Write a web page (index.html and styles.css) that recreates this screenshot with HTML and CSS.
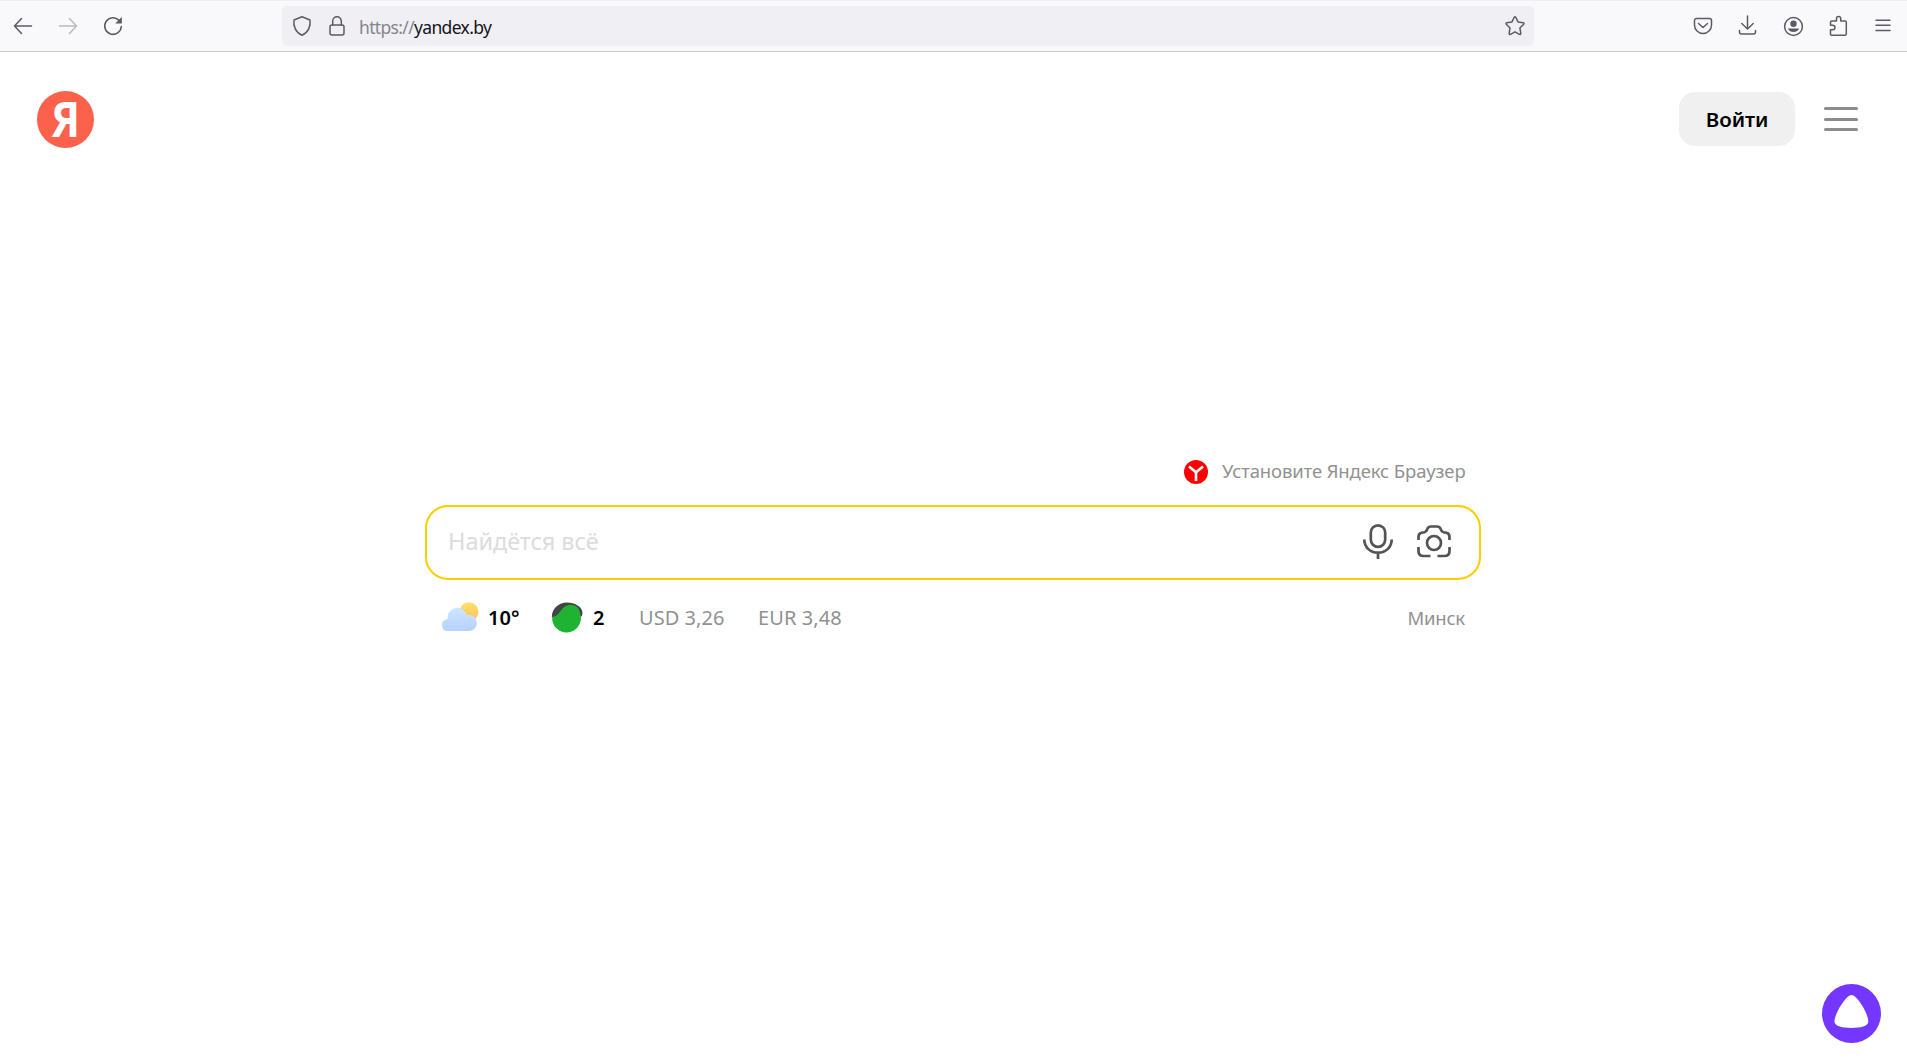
FILE: index.html
```html
<!DOCTYPE html>
<html lang="ru">
<head>
<meta charset="utf-8">
<title>Яндекс</title>
<link rel="stylesheet" href="styles.css">
</head>
<body>
<header class="toolbar">
  <nav class="nav">
    <svg class="ico" width="22" height="22" viewBox="0 0 22 22"><path d="M19.500 11H2.500M9.500 3.500L2.500 11l7 7.500"/></svg>
    <svg class="ico faded" width="22" height="22" viewBox="0 0 22 22"><path d="M2.500 11h17M12.500 3.500l7 7.500-7 7.500"/></svg>
    <svg class="ico" width="22" height="22" viewBox="0 0 22 22"><path d="M17.200 5.500A8.300 8.300 0 1 0 19.300 11.500"/><path class="solid" d="M19.800 2v6.600h-6.600z"/></svg>
  </nav>
  <div class="address">
    <svg class="ico" width="22" height="22" viewBox="0 0 22 22"><path d="M11 1.800L19 5c.9 6-1.600 12.600-8 15.300C4.600 17.600 2.100 11 3 5z"/></svg>
    <svg class="ico lock" width="22" height="22" viewBox="0 0 22 22"><rect x="4" y="10" width="14" height="10" rx="2"/><path d="M6.700 10V6a4.300 4.300 0 0 1 8.600 0v4"/></svg>
    <span class="url"><span class="scheme">https://</span>yandex.by</span>
    <svg class="ico star" width="22" height="22" viewBox="0 0 22 22"><path d="M10.200 2.300q.8-1.300 1.600 0l2.200 4.600 5.200.8q1.400.4.500 1.500l-3.800 3.800.9 5.300q0 1.500-1.400 1L11 16.800l-4.500 2.500q-1.400.5-1.400-1L6 13 2.300 9.200q-.9-1.100.5-1.500L8 6.900z"/></svg>
  </div>
  <div class="tools">
    <svg class="ico" width="22" height="22" viewBox="0 0 22 22"><path d="M4.500 3.500h13a2 2 0 0 1 2 2V10a8.500 8.500 0 0 1-17 0V5.500a2 2 0 0 1 2-2zM6.500 8.500l4.500 4 4.500-4"/></svg>
    <svg class="ico" width="22" height="22" viewBox="0 0 22 22"><path d="M10.500 1v13M4.800 8.500l5.700 5.500 5.700-5.500M2.500 15.500V17a2 2 0 0 0 2 2h12a2 2 0 0 0 2-2v-1.500"/></svg>
    <svg class="ico" width="22" height="22" viewBox="0 0 22 22"><circle cx="11.500" cy="11.500" r="8.900"/><circle class="solid" cx="11.500" cy="8.800" r="3.200"/><path class="solid" d="M6 13.500h11c-.5 2.300-2.800 3.500-5.500 3.500S6.500 15.800 6 13.500z"/></svg>
    <svg class="ico" width="22" height="22" viewBox="0 0 22 22"><path d="M4.500 20.300q-1 0-1-1v-4.500h2.200a2.300 2.300 0 0 0 0-4.600H3.500V7.300q0-1.200 1.200-1.200h4.800V3.500a2.100 2.100 0 0 1 4.200 0v2.600h4.400q1.200 0 1.200 1.200v11.500q0 1.500-1.200 1.500z"/></svg>
    <svg class="ico" width="22" height="22" viewBox="0 0 22 22"><path d="M4 5.200h14M4 10.300h14M4 15.400h14"/></svg>
  </div>
</header>

<div class="head">
  <div class="logo"><svg width="57" height="57" viewBox="0 0 57 57"><text class="ya" x="14" y="46" textLength="29" lengthAdjust="spacingAndGlyphs">Я</text></svg></div>
  <div class="account">
    <button class="login">Войти</button>
    <div class="burger"><i></i><i></i><i></i></div>
  </div>
</div>

<main class="center">
  <div class="promo">
    <svg width="24" height="24" viewBox="0 0 24 24"><circle cx="12" cy="12" r="12" fill="#f00"/><path d="M5 6.500l7 5.700 7-5.700M12 12v9" fill="none" stroke="#fff" stroke-width="2.600"/></svg>
    <span class="promo-text">Установите Яндекс Браузер</span>
  </div>
  <div class="search">
    <span class="hint">Найдётся всё</span>
    <svg class="act" width="30" height="36" viewBox="0 0 30 36"><rect x="7.800" y="1.300" width="14.400" height="21.500" rx="7.200"/><path d="M1.300 15.500c0 7.300 5.500 13.200 13.700 13.200s13.700-5.900 13.700-13.200M15 28.500V35"/></svg>
    <svg class="act" width="34" height="34" viewBox="0 0 34 34"><circle cx="17" cy="18" r="7"/><path d="M1.500 15V12q0-3.500 3-4.200l3-.6q1.800-.5 2.500-2.500 1-3.200 4-3.200h6q3 0 4 3.200.7 2 2.500 2.500l3 .6q3 .7 3 4.200v3M1.500 22v4q0 5 5 5h7M32.500 22v4q0 5-5 5h-7"/></svg>
  </div>
  <div class="info">
    <svg width="38" height="30" viewBox="0 0 38 30">
      <defs>
        <linearGradient id="sun" x2="0" y2="1"><stop offset="0" stop-color="#ffe06a"/><stop offset="1" stop-color="#ffc15e"/></linearGradient>
        <linearGradient id="cloud" x2="0" y2="1"><stop offset="0" stop-color="#cde7ff"/><stop offset="1" stop-color="#b5d1ff"/></linearGradient>
      </defs>
      <circle cx="28" cy="9.700" r="9.500" fill="url(#sun)"/>
      <path d="M6 29a6 6 0 0 1-.2-11.800l.9-.1C6 10.500 11 5.800 16.500 5.800c4.200 0 7.500 2.500 8.900 7.200 5.800-1.300 10.400 2.600 10.400 8 0 4.700-3.500 8-8 8z" fill="url(#cloud)"/>
    </svg>
    <b class="temp">10°</b>
    <svg class="traffic" width="32" height="30" viewBox="0 0 32 30"><path d="M.8 15C1 6 8 .5 16 .5S31.500 5 31.500 11q0 3-2 4L20 10 3 16z" fill="#444"/><path d="M1.200 14.800c5 .2 6.800-4.300 10.200-8 4.500-5 11-5 15-1.500 2 2 2.600 5 3.300 8.200a14.400 14.400 0 1 1-28.500 1.300z" fill="#20b332"/></svg>
    <b class="score">2</b>
    <span class="usd">USD 3,26</span>
    <span class="eur">EUR 3,48</span>
    <span class="city">Минск</span>
  </div>
</main>

<div class="alice"><svg width="59" height="59" viewBox="0 0 59 59"><circle cx="29.500" cy="29.500" r="29.500" fill="#7337ff"/><path d="M29.500 11c5.500 0 16.800 18.500 16.800 26.500 0 5-8 6.400-16.800 6.400s-17-1.400-17-6.400C12.500 29.500 24 11 29.500 11z" fill="#fff"/></svg></div>
</body>
</html>
```
FILE: styles.css
```css
* { box-sizing: border-box; }
body {
  margin: 0;
  height: 1062px;
  overflow: hidden;
  background: #fff;
  font-family: "Noto Sans", sans-serif;
  display: flex;
  flex-direction: column;
}
svg { display: block; flex: none; overflow: visible; }

.toolbar {
  height: 52px;
  flex: none;
  display: flex;
  align-items: center;
  background: #f9f9fb;
  border-top: 1px solid #f0f0f2;
  border-bottom: 1px solid #c9c9ce;
}
.ico { fill: none; stroke: #5b5b66; stroke-width: 1.5; stroke-linecap: round; stroke-linejoin: round; }
.ico .solid { fill: #5b5b66; stroke: none; }
.faded { opacity: .4; }
.nav { width: 282px; padding-left: 12px; display: flex; gap: 23px; }
.address {
  width: 1252px;
  height: 40px;
  padding: 0 8px 0 9px;
  display: flex;
  align-items: center;
  background: #f0f0f4;
  border-radius: 5px;
}
.lock { margin-left: 13px; }
.url { margin-left: 11px; font-size: 17.500px; letter-spacing: -.66px; color: #15141a; white-space: nowrap; padding-top: 2px; }
.scheme { color: #85858c; }
.star { margin-left: auto; }
.tools { flex: 1; padding-left: 158px; display: flex; gap: 23px; }

.head { flex: none; height: 135px; padding: 0 49px 0 37px; display: flex; align-items: center; justify-content: space-between; }
.logo { width: 57px; height: 57px; border-radius: 50%; background: #fc624b; }
.ya { font: 700 48px/1 "Noto Sans", sans-serif; fill: #fff; }
.account { display: flex; align-items: center; gap: 29px; padding-bottom: 1px; }
.login { width: 116px; height: 54px; border: 0; border-radius: 16px; background: #f0f0f0; font: 600 20.500px "Noto Sans", sans-serif; letter-spacing: -.1px; color: #000; padding: 0; }
.burger { width: 34px; display: flex; flex-direction: column; gap: 7.500px; }
.burger i { height: 3px; border-radius: 2px; background: #8c8c8c; }

.center { width: 1056px; margin: 268px 0 0 425px; flex: none; }
.promo { height: 34px; display: flex; justify-content: flex-end; padding: 0 16px 0 0; margin-bottom: 16px; align-items: center; gap: 14px; }
.promo-text { width: 243px; font-size: 18.500px; letter-spacing: -.12px; color: #919191; white-space: nowrap; padding-bottom: 3px; }
.search { height: 75px; padding: 0 28px 1px 21px; border: 2px solid #fc0; border-radius: 23px; display: flex; align-items: center; gap: 24px; }
.hint { flex: 1; font-size: 23.500px; letter-spacing: -.05px; color: #dcdcdc; padding-bottom: 2px; }
.act { fill: none; stroke: #545454; stroke-width: 2.700; }
.info { height: 30px; margin-top: 22px; padding: 0 16px; display: flex; align-items: center; font-size: 20px; color: #919191; white-space: nowrap; }
.info b { color: #000; font-weight: 600; }
.temp { width: 63px; padding-left: 9px; }
.traffic { margin-left: 9px; }
.score { width: 56px; padding-left: 10px; }
.usd { width: 119px; letter-spacing: .05px; }
.eur { width: 85px; letter-spacing: .1px; }
.city { margin-left: auto; font-size: 18.500px; letter-spacing: -.2px; }

.alice { position: absolute; left: 1822px; top: 984px; }
```
